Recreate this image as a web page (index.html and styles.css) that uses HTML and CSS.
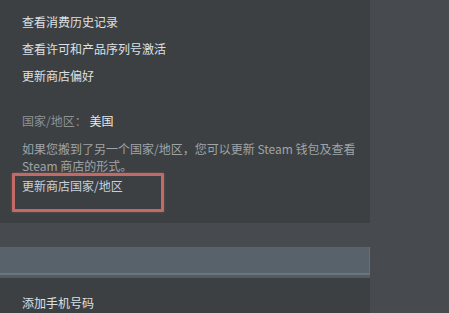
FILE: index.html
```html
<!DOCTYPE html>
<html lang="zh-CN">
<head>
  <meta charset="UTF-8">
  <title>账户详细信息</title>
  <link rel="stylesheet" href="styles.css">
</head>
<body>
  <div class="column">
    <div class="panel store">
      <ul class="links">
        <li><a href="#">查看消费历史记录</a></li>
        <li><a href="#">查看许可和产品序列号激活</a></li>
        <li><a href="#">更新商店偏好</a></li>
      </ul>
      <div class="country">
        <span class="label">国家/地区：</span>
        <span class="value">美国</span>
      </div>
      <p class="note">如果您搬到了另一个国家/地区，您可以更新 Steam 钱包及查看 Steam 商店的形式。</p>
      <a href="#" class="update">更新商店国家/地区</a>
      <div class="highlight"></div>
    </div>
    <div class="section-bar"></div>
    <div class="panel security">
      <a href="#" class="link">添加手机号码</a>
    </div>
  </div>
</body>
</html>
```

FILE: styles.css
```css
body {
  margin: 0;
  background: #474b4f;
  font-family: "Noto Sans CJK SC", "Noto Sans", sans-serif;
  font-size: 12px;
  height: 313px;
  overflow: hidden;
}
a {
  text-decoration: none;
}
.column {
  width: 370px;
  display: flex;
  flex-direction: column;
}
.panel {
  background: #3d4043;
  padding: 0 22px;
}
.store {
  position: relative;
  height: 223px;
  box-sizing: border-box;
  padding-top: 8px;
}
.links {
  list-style: none;
  margin: 0;
  padding: 0;
}
.links li {
  line-height: 27px;
}
.links a {
  color: #dce0e3;
}
.country {
  margin-top: 23px;
  line-height: 18px;
}
.country .label {
  color: #8d9296;
}
.country .value {
  color: #e6e8ea;
}
.note {
  margin: 10px -12px 0 0;
  line-height: 17px;
  color: #9fa4a8;
}
.update {
  display: block;
  margin-top: 3px;
  line-height: 18px;
  color: #c4d2de;
}
.highlight {
  position: absolute;
  left: 12px;
  top: 173px;
  width: 146px;
  height: 33px;
  border: 3px solid #c26a68;
  border-radius: 1px;
  box-shadow: 0 0 2px rgba(194, 106, 104, 0.6);
}
.section-bar {
  margin-top: 24px;
  height: 26px;
  background: #57626b;
  border-bottom: 2px solid #6b757c;
  border-right: 1px solid #657077;
  box-shadow: 0 3px 0 #525c64;
  margin-bottom: 3px;
}
.security {
  height: 35px;
  padding-top: 16px;
  box-sizing: border-box;
}
.security .link {
  color: #dce0e3;
  line-height: 18px;
}
```
